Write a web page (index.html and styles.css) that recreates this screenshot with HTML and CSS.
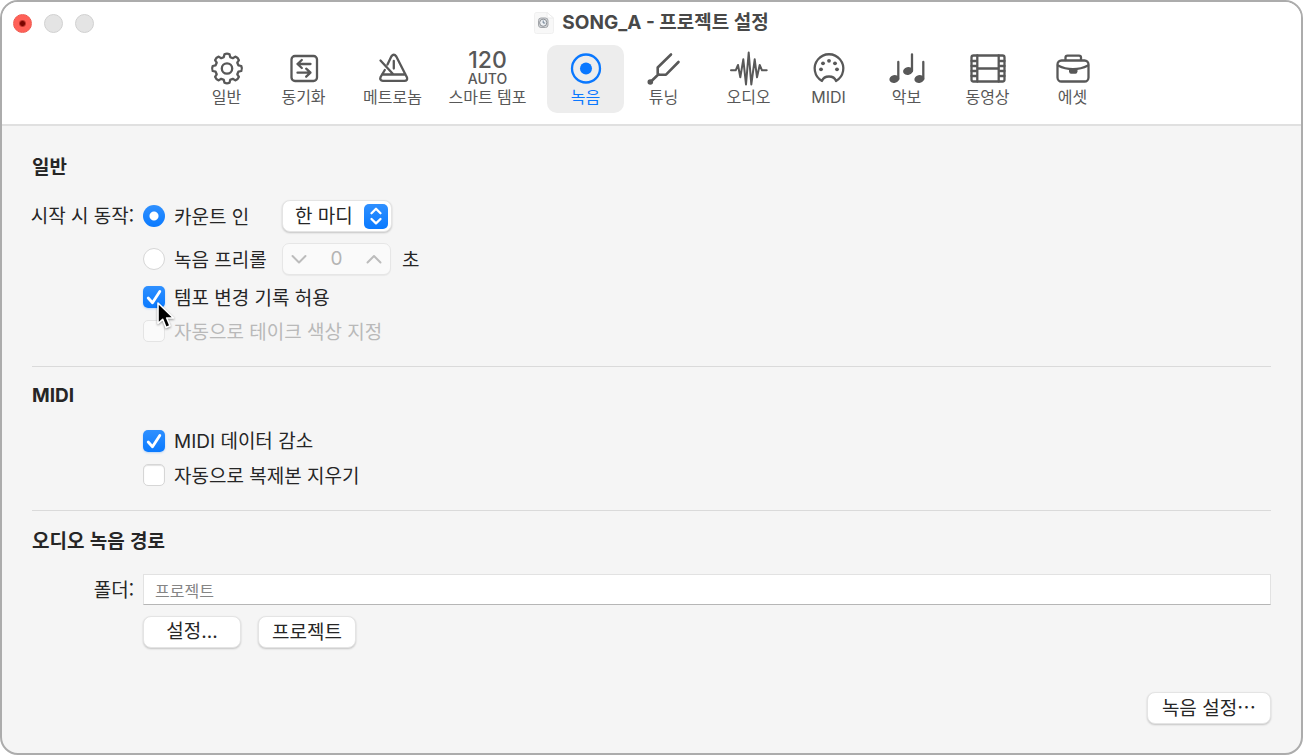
FILE: index.html
```html
<!DOCTYPE html>
<html lang="ko">
<head>
<meta charset="utf-8">
<meta name="viewport" content="width=device-width, initial-scale=1">
<title>SONG_A - 프로젝트 설정</title>
<link rel="stylesheet" href="styles.css">
</head>
<body>
<div class="window">
  <header class="header">
    <div class="titlebar">
      <div class="lights">
        <button class="light light-close" type="button" aria-label="닫기"></button>
        <button class="light" type="button" aria-label="최소화" disabled></button>
        <button class="light" type="button" aria-label="확대" disabled></button>
      </div>
      <div class="title">
        <svg class="doc" viewBox="0 0 20 22" aria-hidden="true">
          <path d="M2 .5h11l6.500 5.500v13.500a2 2 0 0 1-2 2H2.500a2 2 0 0 1-2-2V2.500a2 2 0 0 1 1.500-2z" fill="#f8f8f8" stroke="#f0f0f0"/>
          <path d="M13 .5V4a2 2 0 0 0 2 2h4.500z" fill="#fff" stroke="#ececec"/>
          <rect x="4.500" y="6" width="9.500" height="9.500" rx="2.500" fill="#d5d7da" stroke="#a3a6aa"/>
          <circle cx="9.200" cy="10.700" r="3.600" fill="#eef1f4" stroke="#8b8f94" stroke-width="1"/>
          <path d="M9.200 8.500v2.500h2" fill="none" stroke="#6d7f91"/>
        </svg>
        <h1>SONG_A - 프로젝트 설정</h1>
      </div>
    </div>
    <nav class="toolbar" aria-label="설정 패널">
      <button class="tool" type="button">
        <svg viewBox="0 0 40 36" aria-hidden="true"><g transform="translate(20 18.500)"><path d="M-3.200-11.400-2.500-14.300Q0-15.500 2.500-14.300L3.200-11.400 5.800-10.300 8.340-11.880Q10.960-10.960 11.880-8.340L10.300-5.800 11.400-3.200 14.300-2.500Q15.500 0 14.300 2.500L11.400 3.200 10.300 5.800 11.880 8.340Q10.960 10.960 8.340 11.880L5.800 10.300 3.200 11.400 2.500 14.300Q0 15.500-2.500 14.300L-3.200 11.400-5.800 10.300-8.340 11.880Q-10.960 10.960-11.880 8.340L-10.300 5.800-11.400 3.200-14.300 2.500Q-15.500 0-14.300-2.500L-11.400-3.200-10.300-5.800-11.880-8.340Q-10.960-10.960-8.340-11.880L-5.800-10.300z"/><circle r="5.200"/></g></svg>
        <span>일반</span>
      </button>
      <button class="tool" type="button">
        <svg viewBox="0 0 40 36" aria-hidden="true"><rect x="7.500" y="6" width="25.500" height="25" rx="3.500"/><path d="M26.500 14h-13m4.300-4-4.300 4 4.300 4M13.500 22.700h13m-4.300-4 4.300 4-4.300 4"/></svg>
        <span>동기화</span>
      </button>
      <button class="tool" type="button">
        <svg viewBox="0 0 40 36" aria-hidden="true"><path d="M14.500 14.500 18.300 6.500Q20.800 3 23.300 6.500L34 27.500Q34.800 30.800 31.500 30.800H10Q6.300 30.500 7.600 27L11.800 20M9 24.500H32.500M7.500 10.500 20 24M20.800 11v7.500"/></svg>
        <span>메트로놈</span>
      </button>
      <button class="tool" type="button">
        <span class="tempo"><span class="tempo-value">120</span><span class="tempo-mode">AUTO</span></span>
        <span>스마트 템포</span>
      </button>
      <button class="tool tool-active" type="button" aria-current="page">
        <svg viewBox="0 0 40 36" aria-hidden="true"><circle cx="20" cy="18.500" r="14"/><circle class="solid" cx="20" cy="18.500" r="6"/></svg>
        <span>녹음</span>
      </button>
      <button class="tool" type="button">
        <svg viewBox="0 0 40 36" aria-hidden="true"><path stroke-width="2.600" d="M27 4.500 13.700 17.500V23.500L15 24.700H22L34.500 12M14.500 24.200 6.500 32"/><circle class="solid" cx="6.300" cy="32" r="2.800"/></svg>
        <span>튜닝</span>
      </button>
      <button class="tool" type="button">
        <svg class="wave" viewBox="0 0 40 36" aria-hidden="true"><path d="M2 20.300H6.700L9 15 11.300 27.300 14.300 9.300 17 34.500 19.700 2.500 22.300 34.500 25.700 9.300 28 27.300 30.700 15 33 20.300H37.700"/></svg>
        <span>오디오</span>
      </button>
      <button class="tool" type="button">
        <svg viewBox="0 0 40 36" aria-hidden="true"><path d="M13 31A14.300 14.300 0 1 1 27 31Q25.500 26.500 20 26.500T13 31z"/><g class="solid"><circle cx="12" cy="19.300" r="1.900"/><circle cx="14" cy="13.300" r="1.900"/><circle cx="20" cy="10.800" r="1.900"/><circle cx="26" cy="13.300" r="1.900"/><circle cx="28" cy="19.300" r="1.900"/></g></svg>
        <span>MIDI</span>
      </button>
      <button class="tool" type="button">
        <svg viewBox="0 0 40 36" aria-hidden="true"><g class="solid"><ellipse cx="7.300" cy="29" rx="5" ry="3.900" transform="rotate(-15 7.300 29)"/><ellipse cx="21" cy="21" rx="5" ry="3.900" transform="rotate(-15 21 21)"/><ellipse cx="32.300" cy="29" rx="5" ry="3.900" transform="rotate(-15 32.300 29)"/></g><path d="M11.300 12V29M25 4.300V21M36.300 12V29"/></svg>
        <span>악보</span>
      </button>
      <button class="tool" type="button">
        <svg viewBox="0 0 40 36" aria-hidden="true"><rect x="3.500" y="5.500" width="33" height="26" rx="2"/><path d="M9.300 5.500v26M30.700 5.500v26M9.300 18.500h21.400M3.500 11h5.800M3.500 16h5.800M3.500 21h5.800M3.500 26h5.800M30.700 11h5.800M30.700 16h5.800M30.700 21h5.800M30.700 26h5.800"/></svg>
        <span>동영상</span>
      </button>
      <button class="tool" type="button">
        <svg viewBox="0 0 40 36" aria-hidden="true"><rect x="4.500" y="10.500" width="31" height="21" rx="4"/><path d="M12.500 10V7.500Q12.500 5.700 14.500 5.700H26Q28 5.700 28 7.500V10"/><path d="M5 15.500Q12 19.200 20 19.200T35 15.500"/><path class="solid" d="M16 19h8.500v2.500q-.3 2.300-2 2.300h-4.500q-1.700 0-2-2.300z"/></svg>
        <span>에셋</span>
      </button>
    </nav>
  </header>

  <main class="content">
    <section class="section">
      <h2>일반</h2>
      <div class="form">
        <span class="field-label" id="start-label">시작 시 동작:</span>
        <div class="rows" role="group" aria-labelledby="start-label">
          <div class="row">
            <label class="choice choice-wide"><input class="radio" type="radio" name="start" checked><span>카운트 인</span></label>
            <div class="popup">
              <select aria-label="카운트 인 길이"><option>한 마디</option></select>
              <span class="popup-arrows"><svg viewBox="0 0 24 24" aria-hidden="true"><path d="M7.500 9.200 12 4.800 16.500 9.200M7.500 15 12 19.400 16.500 15"/></svg></span>
            </div>
          </div>
          <div class="row">
            <label class="choice choice-wide"><input class="radio" type="radio" name="start"><span>녹음 프리롤</span></label>
            <div class="stepper">
              <button type="button" aria-label="줄이기" disabled><svg viewBox="0 0 18 12" aria-hidden="true"><path d="M2.500 3 9 9.500 15.500 3"/></svg></button>
              <input class="latin" id="preroll" type="text" value="0" disabled>
              <button type="button" aria-label="늘리기" disabled><svg viewBox="0 0 18 12" aria-hidden="true"><path d="M2.500 9.500 9 3 15.500 9.500"/></svg></button>
            </div>
            <label class="unit" for="preroll">초</label>
          </div>
          <label class="choice">
            <span class="check"><input type="checkbox" checked><svg class="tick" viewBox="0 0 22 22" aria-hidden="true"><path d="M5.200 12 9.500 16.700 16.800 5.500"/></svg>
              <svg class="pointer" viewBox="0 0 22 30" aria-hidden="true"><path d="M2 2V22.500L6.700 18.300 10 26.500 14 24.800 10.700 17H17.500z"/></svg>
            </span>
            <span>템포 변경 기록 허용</span>
          </label>
          <label class="choice choice-disabled">
            <span class="check"><input type="checkbox" disabled></span>
            <span>자동으로 테이크 색상 지정</span>
          </label>
        </div>
      </div>
    </section>

    <section class="section">
      <h2 class="latin">MIDI</h2>
      <div class="form">
        <span></span>
        <div class="rows">
          <label class="choice">
            <span class="check"><input type="checkbox" checked><svg class="tick" viewBox="0 0 22 22" aria-hidden="true"><path d="M5.200 12 9.500 16.700 16.800 5.500"/></svg></span>
            <span><span class="latin">MIDI</span> 데이터 감소</span>
          </label>
          <label class="choice">
            <span class="check"><input type="checkbox"></span>
            <span>자동으로 복제본 지우기</span>
          </label>
        </div>
      </div>
    </section>

    <section class="section">
      <h2>오디오 녹음 경로</h2>
      <div class="form">
        <label class="field-label" for="folder">폴더:</label>
        <div class="rows">
          <input class="path" id="folder" type="text" placeholder="프로젝트">
          <div class="buttons">
            <button class="push" type="button">설정<span class="latin">...</span></button>
            <button class="push" type="button">프로젝트</button>
          </div>
        </div>
      </div>
    </section>
  </main>

  <footer class="footer">
    <button class="push push-wide" type="button">녹음 설정⋯</button>
  </footer>
</div>
</body>
</html>
```
FILE: styles.css
```css
* {
  box-sizing: border-box;
}

body {
  margin: 0;
  background: #fff;
  color: #262626;
  font: 19px/24px "Noto Sans CJK KR", sans-serif;
}

button,
input,
select {
  margin: 0;
  color: inherit;
  font: inherit;
}

.latin,
.header {
  font-family: Inter, "Noto Sans CJK KR", sans-serif;
}

.window {
  display: flex;
  flex-direction: column;
  min-height: 100vh;
  overflow: hidden;
  border: 2px solid #acacac;
  border-radius: 18px;
  background: #f5f5f5;
}

.header {
  padding-bottom: 11px;
  border-bottom: 2px solid #e0e0e0;
  background: #fff;
}

.titlebar {
  display: grid;
  grid-template-columns: 1fr auto 1fr;
  align-items: center;
  height: 43px;
  padding: 0 11px;
}

.lights {
  display: flex;
  gap: 12px;
}

.light {
  width: 19px;
  height: 19px;
  padding: 0;
  border: 1px solid #d0d0d0;
  border-radius: 50%;
  background: #e4e4e4;
}

.light-close {
  border-color: #ee5a50;
  background: radial-gradient(circle, #7a0500 0 2px, #ff6057 4px);
}

.title {
  display: flex;
  align-items: center;
  gap: 8px;
  padding-bottom: 1px;
}

.doc {
  width: 20px;
  height: 22px;
}

h1 {
  margin: 0;
  color: #484848;
  font-size: 19px;
  font-weight: 700;
  line-height: 24px;
}

.toolbar {
  display: grid;
  grid-template-columns: 77px 89px 95px 98px 78px 85px 80px 78px 81px 85px 77px;
  justify-content: center;
  justify-items: start;
  padding-right: 4px;
}

.tool {
  display: flex;
  flex-direction: column;
  align-items: center;
  width: 77px;
  height: 68px;
  padding: 5px 0;
  border: 0;
  border-radius: 10px;
  background: none;
  color: #585858;
  font-size: 16px;
  line-height: 22px;
  white-space: nowrap;
}

.tool-active {
  background: #ededed;
  color: #0a78ff;
}

.tool svg {
  width: 40px;
  height: 36px;
  flex: none;
  fill: none;
  stroke: currentColor;
  stroke-width: 2.3;
  stroke-linecap: round;
  stroke-linejoin: round;
}

.tool .wave {
  stroke-width: 2;
}

.tool .solid {
  fill: currentColor;
  stroke: none;
}

.tempo {
  display: flex;
  flex-direction: column;
  height: 36px;
  font-weight: 500;
}

.tempo-value {
  font-size: 23px;
  line-height: 21px;
}

.tempo-mode {
  font-size: 14px;
  line-height: 15px;
}

.content {
  padding: 11px 30px 0;
}

.section {
  padding: 17px 0 24px;
}

.section + .section {
  border-top: 1px solid #dadada;
}

h2 {
  margin: 0 0 22px;
  font-size: 19px;
  font-weight: 700;
  line-height: 24px;
}

.form {
  display: grid;
  grid-template-columns: 102px 1fr;
  column-gap: 9px;
}

.field-label {
  justify-self: end;
  line-height: 29px;
  white-space: nowrap;
}

.rows {
  display: flex;
  flex-direction: column;
  align-items: flex-start;
  gap: 11px;
}

.row {
  display: flex;
  align-items: center;
  height: 32px;
}

.choice {
  display: flex;
  align-items: center;
  gap: 9px;
  height: 22px;
  white-space: nowrap;
}

.choice + .choice {
  margin-top: 1px;
}

.choice-wide {
  width: 139px;
}

.choice-disabled {
  color: #b9b9b9;
}

.radio,
.check input {
  width: 22px;
  height: 22px;
  flex: none;
  appearance: none;
  border: 1px solid #d6d6d6;
  background: #fff;
}

.radio {
  border-radius: 50%;
}

.radio:checked {
  border: 0;
  background: radial-gradient(circle, #fff 0 4px, transparent 5px), linear-gradient(#2f90ff, #0a7aff);
}

.check {
  position: relative;
  display: grid;
  width: 22px;
  height: 22px;
}

.check input {
  border-radius: 5px;
  box-shadow: inset 0 1px 1px #e2e2e2;
}

.check input:checked {
  border: 0;
  background: linear-gradient(#2f90ff, #0a7aff);
  box-shadow: 0 1px 2px #0a7aff40;
}

.check input:disabled {
  border-color: #e4e4e4;
  background: #fafafa;
  box-shadow: none;
}

.tick {
  position: absolute;
  inset: 0;
  fill: none;
  stroke: #fff;
  stroke-width: 2.8;
  stroke-linecap: round;
  stroke-linejoin: round;
  pointer-events: none;
}

.pointer {
  position: absolute;
  z-index: 1;
  top: 15px;
  left: 13px;
  width: 22px;
  height: 30px;
  overflow: visible;
  fill: #000;
  stroke: #fff;
  stroke-width: 1.6;
  stroke-linejoin: round;
  filter: drop-shadow(0 1px 1px #0006);
  pointer-events: none;
}

.popup {
  position: relative;
  width: 110px;
}

.popup select {
  display: block;
  width: 100%;
  height: 32px;
  padding: 0 36px 3px 12px;
  appearance: none;
  border: 1px solid #e4e4e4;
  border-radius: 8px;
  background: #fff;
  box-shadow: 0 1px 2px #0003;
}

.popup-arrows {
  position: absolute;
  top: 4px;
  right: 4px;
  width: 24px;
  height: 25px;
  border-radius: 5px;
  background: linear-gradient(#2f90ff, #0a7aff);
  pointer-events: none;
}

.popup-arrows svg,
.stepper svg {
  display: block;
  fill: none;
  stroke: #fff;
  stroke-width: 2.3;
  stroke-linecap: round;
  stroke-linejoin: round;
}

.stepper {
  display: flex;
  align-items: center;
  width: 109px;
  height: 32px;
  border: 1px solid #e6e6e6;
  border-radius: 7px;
  background: #fafafa;
  box-shadow: 0 1px 1px #0000000d;
}

.stepper button {
  width: 32px;
  padding: 0 7px;
  border: 0;
  background: none;
}

.stepper svg {
  width: 18px;
  height: 12px;
  stroke: #bcbcbc;
  stroke-width: 2;
}

.stepper input {
  width: 0;
  flex: 1;
  padding: 0;
  border: 0;
  background: none;
  color: #b4b4b4;
  text-align: center;
}

.unit {
  margin-left: 11px;
}

.path {
  width: 100%;
  height: 31px;
  padding: 0 11px;
  border: 1px solid #e2e2e2;
  border-bottom-color: #b6b6b6;
  background: #fff;
  font-size: 16px;
}

.path::placeholder {
  color: #858585;
  opacity: 1;
}

.buttons {
  display: flex;
  gap: 17px;
}

.push {
  min-width: 98px;
  height: 32px;
  padding: 0 12px 3px;
  border: 1px solid #e4e4e4;
  border-radius: 8px;
  background: #fff;
  box-shadow: 0 1px 2px #0003;
  white-space: nowrap;
}

.push-wide {
  min-width: 124px;
}

.footer {
  display: flex;
  justify-content: flex-end;
  margin-top: auto;
  padding: 0 30px 29px;
}
```
